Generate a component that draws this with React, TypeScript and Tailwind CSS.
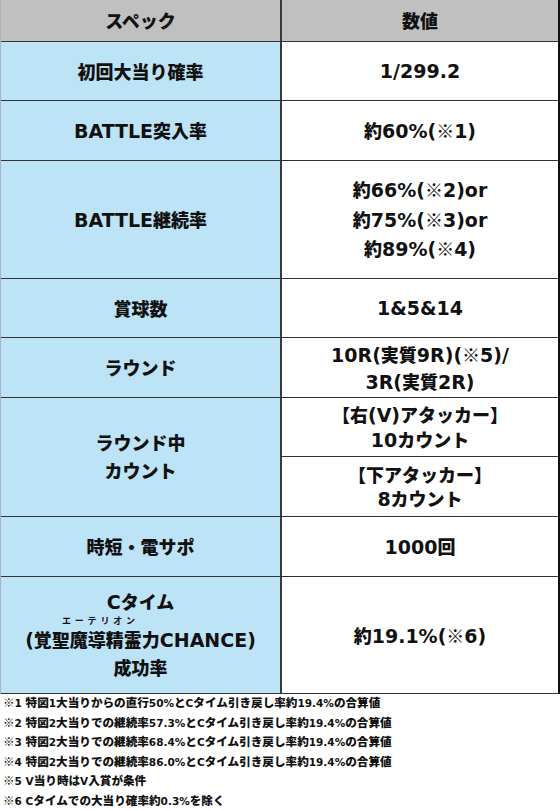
import React from "react";

const CJK = /([\u3000-\u30ff\u3400-\u9fff\uff00-\uffef※【】]+)/;

function J({ t, c }: { t: string; c: string }) {
  return (
    <>
      {t.split(CJK).map((s, i) =>
        i % 2 === 1 ? (
          <span key={i} className={c}>
            {s}
          </span>
        ) : (
          <React.Fragment key={i}>{s}</React.Fragment>
        )
      )}
    </>
  );
}

const TC = "font-['Noto_Sans_CJK_JP'] font-black text-[18px]";
const FC = "font-['Noto_Sans_CJK_JP'] font-black text-[11.6px] leading-none";

function Row({
  h,
  label,
  children,
}: {
  h: string;
  label: React.ReactNode;
  children: React.ReactNode;
}) {
  return (
    <div className={`grid grid-cols-[281px_1fr] border-b border-[#333] ${h}`}>
      <div className="flex items-center justify-center border-r-2 border-[#3a3a3a] bg-[#bde3f7] text-center">
        {label}
      </div>
      <div className="flex items-center justify-center bg-white text-center">{children}</div>
    </div>
  );
}

function L({ t, lh = "leading-[26px]" }: { t: string; lh?: string }) {
  return (
    <div className={lh}>
      <J t={t} c={TC} />
    </div>
  );
}

export default function App() {
  const notes = [
    "※1 特図1大当りからの直行50%とCタイム引き戻し率約19.4%の合算値",
    "※2 特図2大当りでの継続率57.3%とCタイム引き戻し率約19.4%の合算値",
    "※3 特図2大当りでの継続率68.4%とCタイム引き戻し率約19.4%の合算値",
    "※4 特図2大当りでの継続率86.0%とCタイム引き戻し率約19.4%の合算値",
    "※5 V当り時はV入賞が条件",
    "※6 Cタイムでの大当り確率約0.3%を除く",
  ];
  return (
    <div className="w-[560px] bg-white font-['DejaVu_Sans',sans-serif] text-[19px] font-bold text-[#111]">
      <div className="border-l border-r-2 border-l-[#a9b4bd] border-r-[#111]">
        <div className="grid h-[42px] grid-cols-[281px_1fr] border-b border-[#333] bg-[#c0c0c0]">
          <div className="flex items-center justify-center border-r-2 border-[#3a3a3a]">
            <L t="スペック" />
          </div>
          <div className="flex items-center justify-center">
            <L t="数値" />
          </div>
        </div>
        <Row h="h-[59px]" label={<L t="初回大当り確率" />}>
          <L t="1/299.2" />
        </Row>
        <Row h="h-[60px]" label={<L t="BATTLE突入率" />}>
          <L t="約60%(※1)" />
        </Row>
        <Row h="h-[118px]" label={<L t="BATTLE継続率" />}>
          <div>
            <L t="約66%(※2)or" lh="leading-[28.5px]" />
            <L t="約75%(※3)or" lh="leading-[28.5px]" />
            <L t="約89%(※4)" lh="leading-[28.5px]" />
          </div>
        </Row>
        <Row h="h-[59px]" label={<L t="賞球数" />}>
          <L t="1&5&14" />
        </Row>
        <Row h="h-[60px]" label={<L t="ラウンド" />}>
          <div>
            <L t="10R(実質9R)(※5)/" />
            <L t="3R(実質2R)" />
          </div>
        </Row>
        <div className="grid h-[119px] grid-cols-[281px_1fr] border-b border-[#333]">
          <div className="flex items-center justify-center border-r-2 border-[#3a3a3a] bg-[#bde3f7] text-center">
            <div>
              <L t="ラウンド中" lh="leading-[27px]" />
              <L t="カウント" lh="leading-[27px]" />
            </div>
          </div>
          <div className="flex flex-col bg-white text-center">
            <div className="flex h-[59px] items-center justify-center border-b border-[#333]">
              <div>
                <L t="【右(V)アタッカー】" lh="leading-[24px]" />
                <L t="10カウント" lh="leading-[24px]" />
              </div>
            </div>
            <div className="flex flex-1 items-center justify-center">
              <div>
                <L t="【下アタッカー】" lh="leading-[23px]" />
                <L t="8カウント" lh="leading-[23px]" />
              </div>
            </div>
          </div>
        </div>
        <Row h="h-[60px]" label={<L t="時短・電サポ" />}>
          <L t="1000回" />
        </Row>
        <Row
          h="h-[117px]"
          label={
            <div className="flex w-full flex-col items-center">
              <L t="Cタイム" lh="leading-[26px]" />
              <div className="h-[12px] w-full pl-[61px] text-left font-['Noto_Sans_CJK_JP'] text-[9px] leading-[12px] tracking-[3.8px]">
                エーテリオン
              </div>
              <L t="(覚聖魔導精霊力CHANCE)" lh="leading-[24px]" />
              <L t="成功率" lh="leading-[30px]" />
            </div>
          }
        >
          <L t="約19.1%(※6)" />
        </Row>
      </div>
      <div className="pl-[3px] text-[10.5px]">
        {notes.map((n, i) => (
          <div key={i} className="h-[19.6px] whitespace-nowrap leading-[19.6px]">
            <J t={n} c={FC} />
          </div>
        ))}
      </div>
    </div>
  );
}
